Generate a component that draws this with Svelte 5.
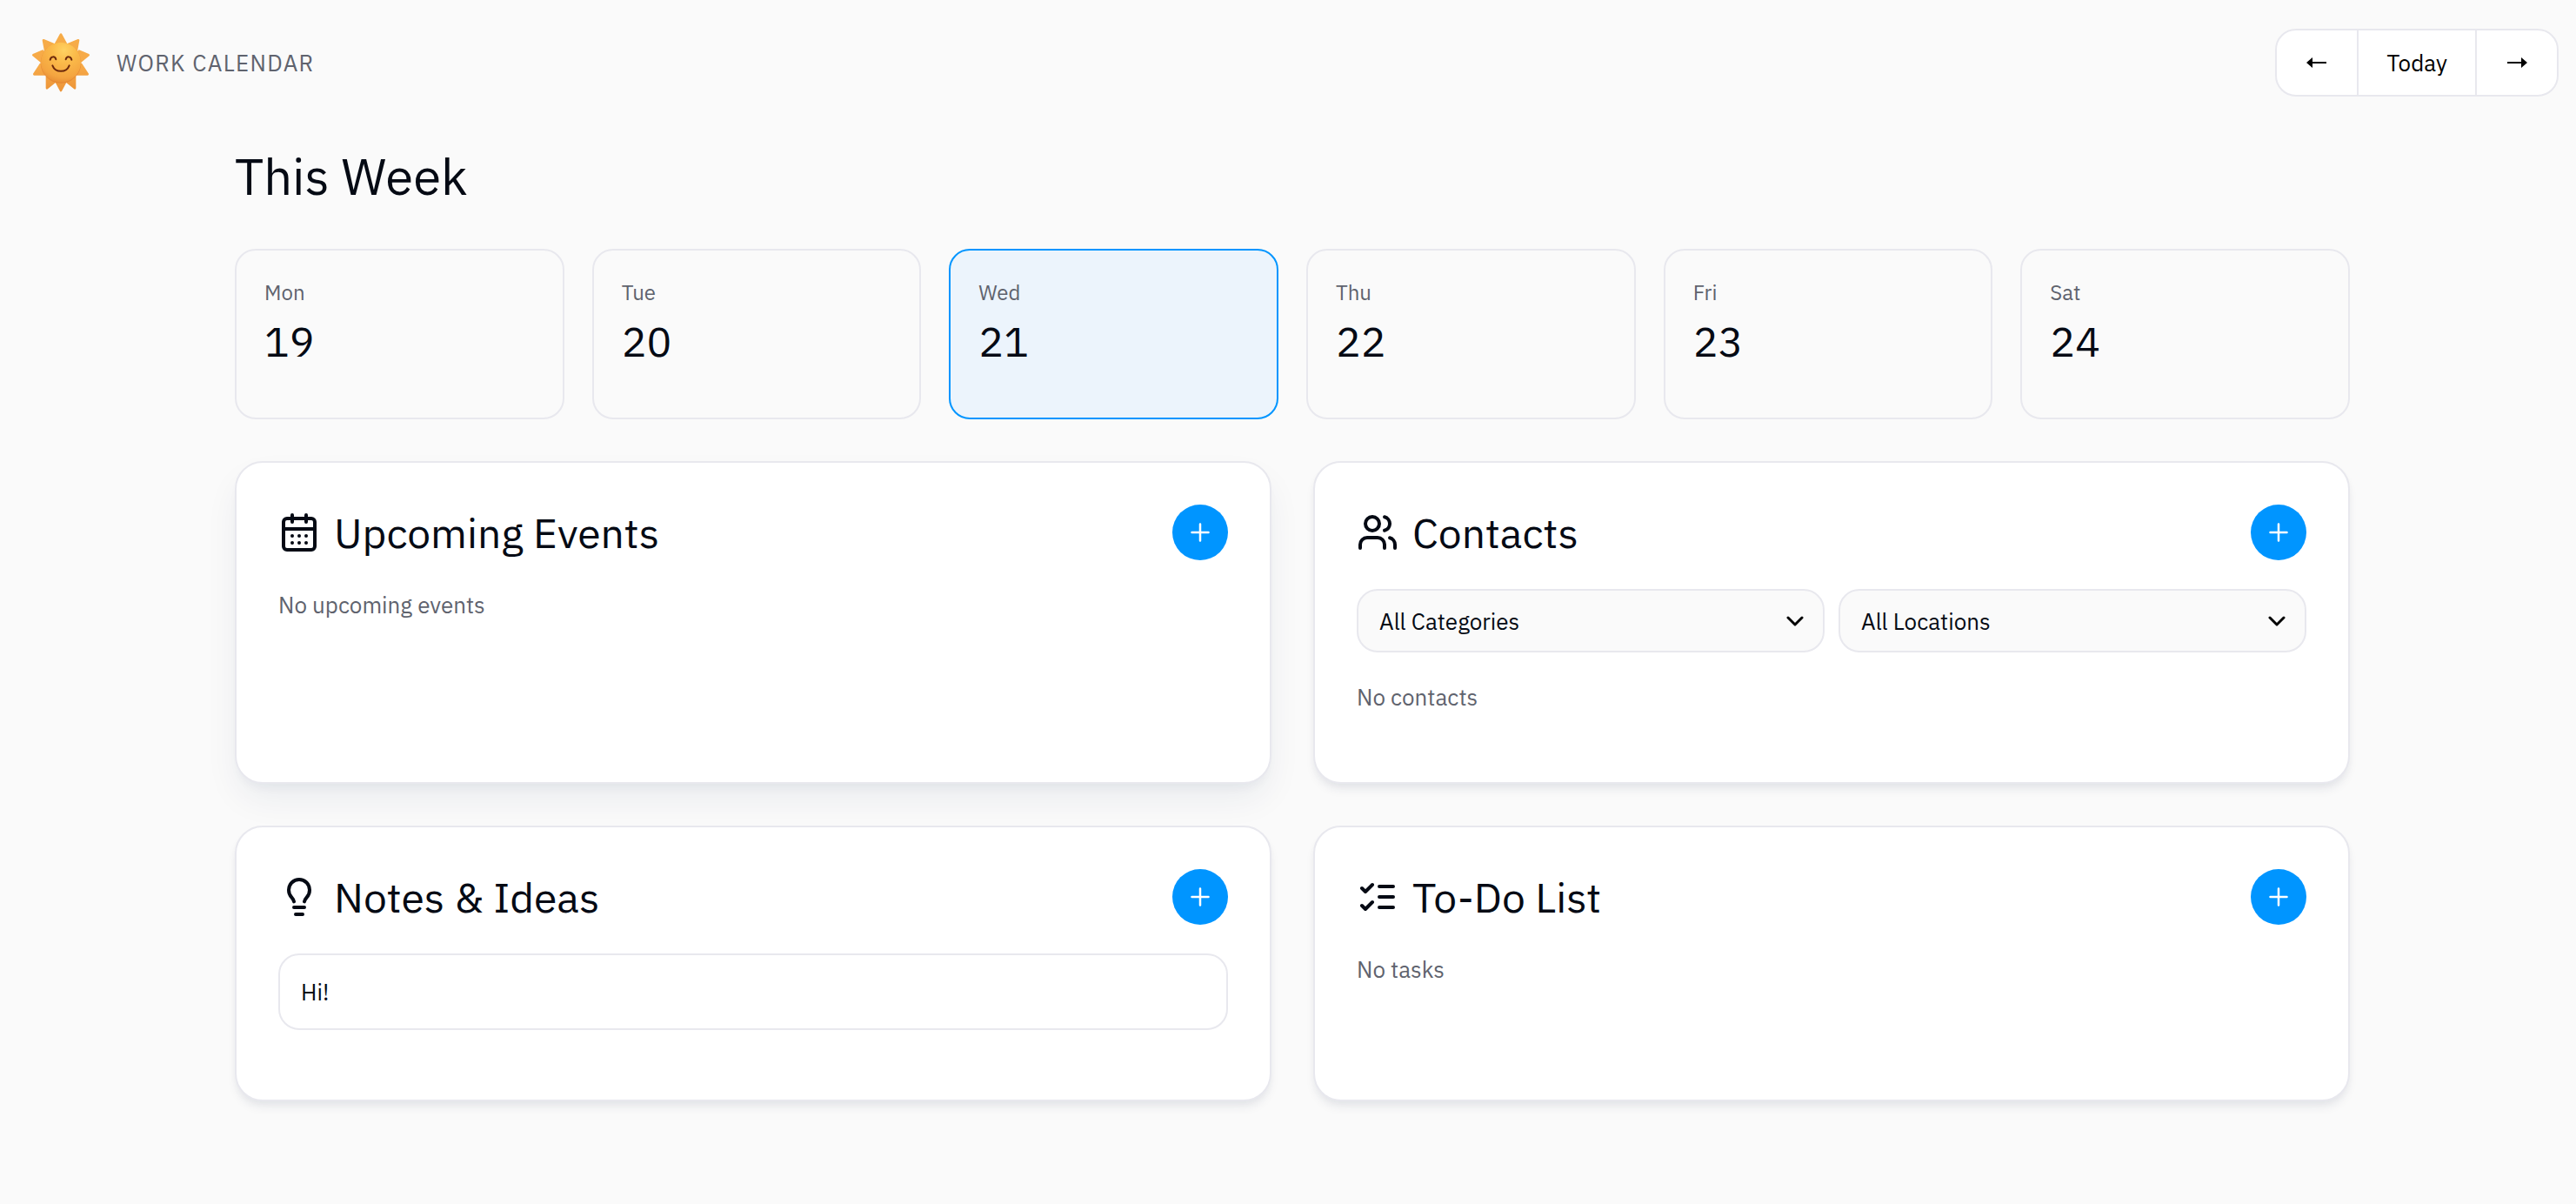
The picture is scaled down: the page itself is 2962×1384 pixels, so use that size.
<script>
  const days = [
    { name: 'Mon', date: 19 },
    { name: 'Tue', date: 20 },
    { name: 'Wed', date: 21 },
    { name: 'Thu', date: 22 },
    { name: 'Fri', date: 23 },
    { name: 'Sat', date: 24 }
  ];
  let selected = $state(21);
</script>

{#snippet cardHeader(title, icon)}
  <div class="card-header">
    <svg class="icon" viewBox="0 0 24 24" aria-hidden="true">
      {#if icon === 'calendar'}
        <path d="M8 2v4M16 2v4M3 10h18" />
        <rect x="3" y="4" width="18" height="18" rx="2" />
        <path d="M8 14h.01M12 14h.01M16 14h.01M8 18h.01M12 18h.01M16 18h.01" />
      {:else if icon === 'users'}
        <path d="M2 21v-2a4 4 0 0 1 4-4h6a4 4 0 0 1 4 4v2" />
        <circle cx="9" cy="7" r="4" />
        <path d="M22 21v-2a4 4 0 0 0-3-3.87M16 3.13a4 4 0 0 1 0 7.75" />
      {:else if icon === 'bulb'}
        <path d="M9 14.7c-.2-1-.7-1.700-1.400-2.500C6.500 11 6 9.600 6 8a6 6 0 0 1 12 0c0 1.600-.5 3-1.600 4.200-.7.8-1.200 1.500-1.400 2.500" />
        <path d="M9 18h6M10 22h4" />
      {:else}
        <path d="m3 17 2 2 4-4M3 7l2 2 4-4M13 6h8M13 12h8M13 18h8" />
      {/if}
    </svg>
    <h2>{title}</h2>
    <button class="add" aria-label={`Add to ${title}`}>
      <svg viewBox="0 0 24 24" aria-hidden="true"><path d="M2.500 12h19M12 2.500v19" /></svg>
    </button>
  </div>
{/snippet}

{#snippet dropdown(label, option)}
  <div class="select">
    <select aria-label={label}>
      <option>{option}</option>
    </select>
    <svg viewBox="0 0 20 12" aria-hidden="true"><path d="m2 2 8 8 8-8" /></svg>
  </div>
{/snippet}

<div class="app">
  <header>
    <svg class="logo" viewBox="0 0 216 216" aria-hidden="true">
      <defs>
        <radialGradient id="face" cx="0.58" cy="0.2" r="0.85">
          <stop offset="0" stop-color="#ffd262" />
          <stop offset="0.35" stop-color="#fbbb4a" />
          <stop offset="0.8" stop-color="#f4a440" />
          <stop offset="1" stop-color="#e68a32" />
        </radialGradient>
        <linearGradient id="ray" x1="0" y1="0" x2="0" y2="216" gradientUnits="userSpaceOnUse">
          <stop offset="0" stop-color="#f6ac48" />
          <stop offset="0.55" stop-color="#f7aa48" />
          <stop offset="1" stop-color="#eb9236" />
        </linearGradient>
      </defs>
      <g fill="url(#ray)" stroke="url(#ray)" stroke-width="8" stroke-linejoin="round">
        <path d="M108 11 90 44v10h36V44z" />
        <path d="M168 31l-36 15 4 24 24 4z" />
        <path d="M203 82l-32-14-12 16 12 24z" />
        <path d="M200 148l-22-34-22 18 4 16z" />
        <path d="M156 196l-30-24 12-20 18-8z" />
        <path d="M108 204l-18-34 18-10 18 10z" />
        <path d="M60 196l30-24-12-20-18-8z" />
        <path d="M16 148l22-34 22 18-4 16z" />
        <path d="M13 82l32-14 12 16-12 24z" />
        <path d="M48 31l36 15-4 24-24 4z" />
      </g>
      <circle cx="108" cy="109" r="70" fill="#d96f25" opacity="0.5" />
      <circle cx="108" cy="107" r="69" fill="url(#face)" />
      <g fill="none" stroke="#6e2a0c" stroke-width="6" stroke-linecap="round">
        <path d="M71 98c3-13 17-13 20-1M125 97c3-12 17-12 20 1" />
        <path d="M79 118c10 26 48 26 58 0" />
      </g>
    </svg>
    <span class="brand">WORK CALENDAR</span>
    <nav class="pager" aria-label="Week">
      <button aria-label="Previous week">
        <svg viewBox="0 0 24 12" aria-hidden="true"><path d="M0 6 7 0v5h16v2H7v5z" /></svg>
      </button>
      <button class="today">Today</button>
      <button aria-label="Next week">
        <svg viewBox="0 0 24 12" aria-hidden="true"><path d="M24 6 17 0v5H1v2h16v5z" /></svg>
      </button>
    </nav>
  </header>

  <main>
    <h1>This Week</h1>
    <div class="days">
      {#each days as day}
        <button class="day" class:active={day.date === selected} onclick={() => (selected = day.date)}>
          <span class="name">{day.name}</span>
          <span class="date">{day.date}</span>
        </button>
      {/each}
    </div>

    <div class="cards">
      <section class="card raised">
        {@render cardHeader('Upcoming Events', 'calendar')}
        <p>No upcoming events</p>
      </section>
      <section class="card">
        {@render cardHeader('Contacts', 'users')}
        <div class="filters">
          {@render dropdown('Category', 'All Categories')}
          {@render dropdown('Location', 'All Locations')}
        </div>
        <p>No contacts</p>
      </section>
      <section class="card">
        {@render cardHeader('Notes & Ideas', 'bulb')}
        <div class="note">Hi!</div>
      </section>
      <section class="card">
        {@render cardHeader('To-Do List', 'list')}
        <p>No tasks</p>
      </section>
    </div>
  </main>
</div>

<style>
  :global(body) {
    background: #fafafa;
  }
  .app,
  .app * {
    box-sizing: border-box;
  }
  .app {
    padding-left: 10px;
    font-family: 'IBM Plex Sans', Roboto, sans-serif;
    font-size: 26px;
    line-height: 36px;
    color: #050a14;
  }
  button,
  select {
    font: inherit;
    color: inherit;
    cursor: pointer;
  }
  h1,
  h2,
  p {
    margin: 0;
    font-weight: 400;
  }
  header {
    display: flex;
    align-items: center;
    padding: 33px 20px 0 24px;
  }
  .logo {
    width: 72px;
    height: 72px;
  }
  .brand {
    margin-left: 28px;
    letter-spacing: 0.05em;
    color: #5f636e;
  }
  .pager {
    display: flex;
    margin-left: auto;
    border: 2px solid #e8e8ee;
    border-radius: 24px;
    background: #fff;
    overflow: hidden;
  }
  .pager button {
    display: flex;
    align-items: center;
    justify-content: center;
    height: 74px;
    padding: 0 34px;
    border: 0;
    background: none;
    color: #000;
  }
  .pager .today {
    padding: 0 32px;
  }
  .pager button + button {
    border-left: 2px solid #e8e8ee;
  }
  .pager svg {
    width: 24px;
    height: 12px;
  }
  main {
    max-width: 2432px;
    margin: 0 auto;
    padding: 57px 0 64px;
  }
  h1 {
    font-size: 58px;
    line-height: 70px;
    margin-bottom: 48px;
  }
  .days {
    display: grid;
    grid-template-columns: repeat(6, 1fr);
    gap: 32px;
    margin-bottom: 48px;
  }
  .day {
    display: flex;
    flex-direction: column;
    gap: 16px;
    min-height: 196px;
    padding: 32px;
    border: 2px solid #e8e8ee;
    border-radius: 24px;
    background: #fafafa;
    text-align: left;
  }
  .day.active {
    border-color: #0095ff;
    background: #ecf4fc;
  }
  .name {
    font-size: 24px;
    line-height: 32px;
    color: #5f636e;
  }
  .date {
    font-size: 48px;
    line-height: 48px;
  }
  .cards {
    display: grid;
    grid-template-columns: 1fr 1fr;
    gap: 48px;
  }
  .card {
    display: flex;
    flex-direction: column;
    gap: 33px;
    padding: 48px 48px 80px;
    border: 2px solid #e8e8ee;
    border-radius: 32px;
    background: #fff;
    box-shadow: 0 8px 12px -2px #14285014, 0 4px 8px -2px #1428500a;
  }
  .card.raised {
    box-shadow: 0 20px 40px -4px #14285012, 0 8px 12px -4px #1428500c;
  }
  .card-header {
    display: flex;
    align-items: center;
    gap: 16px;
  }
  .icon {
    width: 48px;
    height: 48px;
    fill: none;
    stroke: currentColor;
    stroke-width: 2;
    stroke-linecap: round;
    stroke-linejoin: round;
  }
  h2 {
    font-size: 48px;
    line-height: 60px;
  }
  .add {
    display: grid;
    place-items: center;
    width: 64px;
    height: 64px;
    margin-left: auto;
    padding: 0;
    border: 0;
    border-radius: 50%;
    background: #0095ff;
  }
  .add svg {
    width: 24px;
    height: 24px;
    fill: none;
    stroke: #fff;
    stroke-width: 2.5;
    stroke-linecap: round;
  }
  p {
    color: #5f636e;
  }
  .filters {
    display: grid;
    grid-template-columns: 1fr 1fr;
    gap: 16px;
  }
  .select {
    display: grid;
    align-items: center;
  }
  .select > * {
    grid-area: 1 / 1;
  }
  select {
    appearance: none;
    width: 100%;
    height: 73px;
    padding: 0 64px 0 24px;
    border: 2px solid #e8e8ee;
    border-radius: 24px;
    background: #fafafa;
  }
  .select svg {
    justify-self: end;
    width: 20px;
    height: 12px;
    margin-right: 24px;
    fill: none;
    stroke: #000;
    stroke-width: 3;
    stroke-linecap: round;
    stroke-linejoin: round;
    pointer-events: none;
  }
  .note {
    padding: 24px;
    border: 2px solid #e8e8ee;
    border-radius: 24px;
  }
</style>
